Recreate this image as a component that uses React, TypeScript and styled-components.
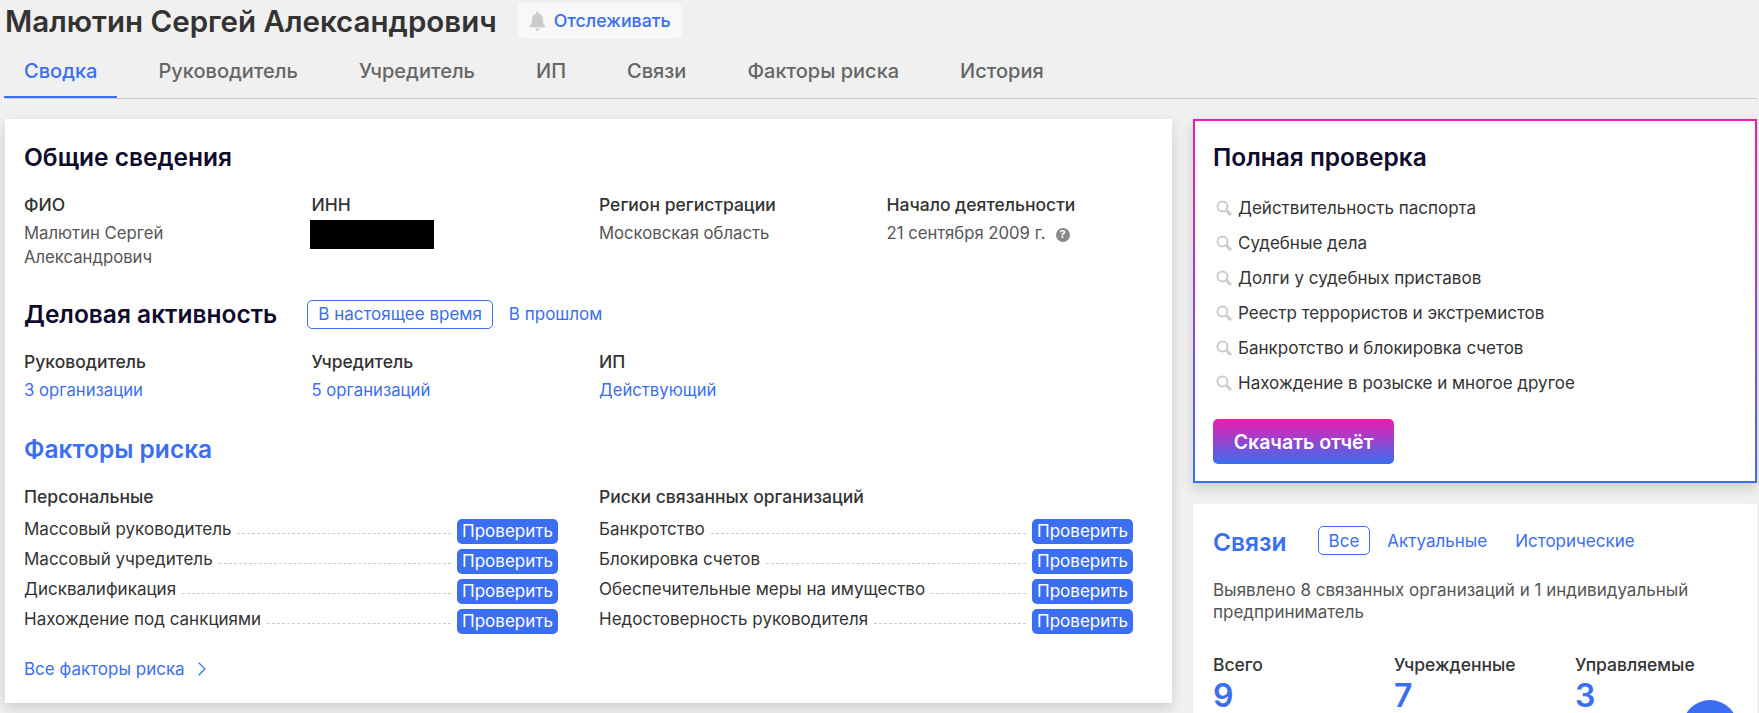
import React from "react";
import styled, { createGlobalStyle } from "styled-components";
import { ChevronRight } from "lucide-react";

const GlobalStyle = createGlobalStyle`
	html, body {
		margin: 0;
		height: 100%;
		overflow: hidden;
		background: #f0f0f0;
		font-family: Inter, Roboto, sans-serif;
		font-size: 17px;
		color: #333;
	}
	* { box-sizing: border-box; }
`;

const blue = "#3b6ef0";
const navy = "#0e0b2d";

const Page = styled.div`
	width: 1759px;
	height: 713px;
	overflow: hidden;
	padding: 3px 2px 0 5px;
`;

const Header = styled.header`
	display: flex;
	align-items: center;
	gap: 21px;
	height: 35px;
`;

const Title = styled.h1`
	margin: 0;
	font-size: 29.5px;
	font-weight: 600;
	color: #333;
`;

const TrackButton = styled.button`
	display: flex;
	align-items: center;
	gap: 8px;
	width: 164px;
	height: 35px;
	padding: 0 11px;
	border: 0;
	border-radius: 5px;
	background: #f8f8f8;
	color: ${blue};
	font: 500 17.8px Inter, sans-serif;
	white-space: nowrap;
`;

const Tabs = styled.nav`
	display: flex;
	gap: 21px;
	height: 61px;
	border-bottom: 1px solid #ccc;
`;

const Tab = styled.a<{ $active?: boolean }>`
	display: flex;
	align-items: center;
	height: 60px;
	padding: 8px 20px 0;
	font-size: 20px;
	font-weight: 500;
	color: ${({ $active }) => ($active ? blue : "#666")};
	border-bottom: 2px solid ${({ $active }) => ($active ? blue : "transparent")};

	&:first-child {
		margin-left: -1px;
	}
`;

const Columns = styled.div`
	display: flex;
	gap: 21px;
	margin-top: 20px;
`;

const MainCard = styled.section`
	width: 1167px;
	height: 584px;
	flex: none;
	padding: 20px 40px 0 19px;
	background: #fff;
	box-shadow: 0 5px 12px rgba(0, 0, 0, 0.15);
`;

const Side = styled.aside`
	display: flex;
	flex-direction: column;
	gap: 21px;
	width: 564px;
`;

const Heading = styled.h2<{ $blue?: boolean }>`
	margin: 0;
	font-size: 24.5px;
	line-height: 36px;
	font-weight: 600;
	color: ${({ $blue }) => ($blue ? blue : navy)};
`;

const InfoGrid = styled.div<{ $top: number }>`
	display: grid;
	grid-template-columns: repeat(4, 287.5px);
	margin-top: ${({ $top }) => $top}px;
`;

const Label = styled.div`
	font-size: 17.5px;
	font-weight: 500;
	line-height: 24px;
	color: #333;
`;

const Value = styled.div`
	margin-top: 4px;
	font-size: 16.7px;
	line-height: 24px;
	color: #555;
	width: 250px;
`;

const LinkValue = styled(Value)`
	color: ${blue};
`;

const Redacted = styled.div`
	width: 124px;
	height: 29px;
	margin: 3px 0 0 -2px;
	background: #000;
`;

const HelpDot = styled.span`
	display: inline-flex;
	align-items: center;
	justify-content: center;
	width: 14px;
	height: 14px;
	margin-left: 10px;
	border-radius: 50%;
	background: #888;
	color: #fff;
	font-size: 11px;
	font-weight: 700;
	line-height: 1;
	vertical-align: 1px;
`;

const HeadingRow = styled.div<{ $top: number; $gap: number }>`
	display: flex;
	align-items: center;
	margin-top: ${({ $top }) => $top}px;
	gap: ${({ $gap }) => $gap}px;
`;

const Filter = styled.a<{ $active?: boolean }>`
	display: flex;
	align-items: center;
	height: 29px;
	padding: 0 10px;
	border: 1px solid ${({ $active }) => ($active ? blue : "transparent")};
	border-radius: 5px;
	color: ${blue};
`;

const RiskGrid = styled.div`
	display: grid;
	grid-template-columns: 534px 534px;
	column-gap: 41px;
	margin-top: 18px;
`;

const RiskColumn = styled.div`
	display: flex;
	flex-direction: column;
`;

const RiskTitle = styled(Label)`
	margin-bottom: 7px;
`;

const RiskRow = styled.div`
	display: flex;
	align-items: center;
	height: 30px;
`;

const RiskName = styled.span`
	position: relative;
	top: -2px;
	line-height: 24px;
	color: #333;
	white-space: nowrap;
`;

const Dots = styled.span`
	flex: 1;
	margin: 5px 6px 0;
	border-bottom: 1px dashed #ccc;
`;

const CheckButton = styled.button`
	width: 101px;
	height: 25px;
	padding: 0;
	border: 0;
	border-radius: 5px;
	background: ${blue};
	color: #fff;
	font: 400 17px/25px Inter, sans-serif;
`;

const AllLink = styled.a`
	display: flex;
	align-items: center;
	gap: 5px;
	margin-top: 21px;
	line-height: 24px;
	color: ${blue};
`;

const PromoCard = styled.section`
	height: 364px;
	padding: 18px 18px 0;
	border: 2px solid transparent;
	background:
		linear-gradient(#fff, #fff) padding-box,
		linear-gradient(180deg, #ee1bae, ${blue}) border-box;
	box-shadow: 0 5px 12px rgba(0, 0, 0, 0.15);
`;

const CheckList = styled.ul`
	display: flex;
	flex-direction: column;
	gap: 11px;
	margin: 21px 0 0;
	padding: 0;
	list-style: none;
`;

const CheckItem = styled.li`
	display: flex;
	align-items: center;
	gap: 6px;
	height: 24px;
	color: #333;
`;

const SearchIcon = styled.svg`
	width: 16px;
	height: 16px;
	flex: none;
	margin-left: 3px;
`;

const DownloadButton = styled.button`
	width: 181px;
	height: 45px;
	margin-top: 24px;
	border: 0;
	border-radius: 5px;
	background: linear-gradient(180deg, #ee1bae, ${blue});
	color: #fff;
	font: 600 19.5px Inter, sans-serif;
`;

const LinksCard = styled.section`
	height: 260px;
	padding: 20px 20px 0;
	background: #fff;
`;

const FilterRow = styled.div<{ $gap: number; $raise?: number }>`
	display: flex;
	align-items: center;
	gap: ${({ $gap }) => $gap}px;
	margin-bottom: ${({ $raise }) => $raise ?? 0}px;
`;

const LinksText = styled.p`
	margin: 19px 0 0;
	line-height: 22px;
	color: #555;
`;

const Stats = styled.div`
	display: grid;
	grid-template-columns: repeat(3, 181px);
	margin-top: 30px;
`;

const StatNumber = styled.div`
	font-size: 32px;
	line-height: 38px;
	font-weight: 600;
	color: ${blue};
`;

const Fab = styled.div`
	position: fixed;
	left: 1682px;
	top: 700px;
	width: 56px;
	height: 56px;
	border-radius: 50%;
	background: ${blue};
`;

const tabs = ["Сводка", "Руководитель", "Учредитель", "ИП", "Связи", "Факторы риска", "История"];
const personal = ["Массовый руководитель", "Массовый учредитель", "Дисквалификация", "Нахождение под санкциями"];
const related = ["Банкротство", "Блокировка счетов", "Обеспечительные меры на имущество", "Недостоверность руководителя"];
const checks = [
	"Действительность паспорта",
	"Судебные дела",
	"Долги у судебных приставов",
	"Реестр террористов и экстремистов",
	"Банкротство и блокировка счетов",
	"Нахождение в розыске и многое другое",
];

const Risks: React.FC<{ title: string; items: string[] }> = ({ title, items }) => (
	<RiskColumn>
		<RiskTitle>{title}</RiskTitle>
		{items.map((item) => (
			<RiskRow key={item}>
				<RiskName>{item}</RiskName>
				<Dots />
				<CheckButton>Проверить</CheckButton>
			</RiskRow>
		))}
	</RiskColumn>
);

const App: React.FC = () => {
	return (
		<Page>
			<GlobalStyle />
			<Header>
				<Title>Малютин Сергей Александрович</Title>
				<TrackButton>
					<svg width="18" height="20" viewBox="0 0 18 20" fill="#ccc">
						<path d="M9 0a1.5 1.5 0 0 1 1.5 1.5v.7C13.4 2.9 15 5.4 15 8.4v4.1l2.4 3.1c.3.4 0 1-.5 1H1.1c-.5 0-.8-.6-.5-1L3 12.5V8.4c0-3 1.6-5.5 4.500-6.200v-.7A1.500 1.500 0 0 1 9 0z" />
						<path d="M6.800 18h4.400a2.200 2 0 0 1-4.400 0z" />
					</svg>
					Отслеживать
				</TrackButton>
			</Header>
			<Tabs>
				{tabs.map((tab, i) => (
					<Tab key={tab} $active={i === 0}>{tab}</Tab>
				))}
			</Tabs>
			<Columns>
				<MainCard>
					<Heading>Общие сведения</Heading>
					<InfoGrid $top={18}>
						<div>
							<Label>ФИО</Label>
							<Value>Малютин Сергей Александрович</Value>
						</div>
						<div>
							<Label>ИНН</Label>
							<Redacted />
						</div>
						<div>
							<Label>Регион регистрации</Label>
							<Value>Московская область</Value>
						</div>
						<div>
							<Label>Начало деятельности</Label>
							<Value>
								21 сентября 2009 г.
								<HelpDot>?</HelpDot>
							</Value>
						</div>
					</InfoGrid>
					<HeadingRow $top={27} $gap={30}>
						<Heading>Деловая активность</Heading>
						<FilterRow $gap={5}>
							<Filter $active>В настоящее время</Filter>
							<Filter>В прошлом</Filter>
						</FilterRow>
					</HeadingRow>
					<InfoGrid $top={18}>
						<div>
							<Label>Руководитель</Label>
							<LinkValue>3 организации</LinkValue>
						</div>
						<div>
							<Label>Учредитель</Label>
							<LinkValue>5 организаций</LinkValue>
						</div>
						<div>
							<Label>ИП</Label>
							<LinkValue>Действующий</LinkValue>
						</div>
					</InfoGrid>
					<HeadingRow $top={29} $gap={0}>
						<Heading $blue>Факторы риска</Heading>
					</HeadingRow>
					<RiskGrid>
						<Risks title="Персональные" items={personal} />
						<Risks title="Риски связанных организаций" items={related} />
					</RiskGrid>
					<AllLink>
						Все факторы риска
						<ChevronRight size={24} strokeWidth={1.2} />
					</AllLink>
				</MainCard>
				<Side>
					<PromoCard>
						<Heading>Полная проверка</Heading>
						<CheckList>
							{checks.map((check) => (
								<CheckItem key={check}>
									<SearchIcon viewBox="0 0 16 16" fill="none" stroke="#ccc">
										<circle cx="6.500" cy="6.500" r="5" strokeWidth="2" />
										<path d="M10.500 10.500L15 15" strokeWidth="3" />
									</SearchIcon>
									{check}
								</CheckItem>
							))}
						</CheckList>
						<DownloadButton>Скачать отчёт</DownloadButton>
					</PromoCard>
					<LinksCard>
						<HeadingRow $top={0} $gap={31}>
							<Heading $blue>Связи</Heading>
							<FilterRow $gap={6} $raise={3}>
								<Filter $active>Все</Filter>
								<Filter>Актуальные</Filter>
								<Filter>Исторические</Filter>
							</FilterRow>
						</HeadingRow>
						<LinksText>Выявлено 8 связанных организаций и 1 индивидуальный предприниматель</LinksText>
						<Stats>
							<div>
								<Label>Всего</Label>
								<StatNumber>9</StatNumber>
							</div>
							<div>
								<Label>Учрежденные</Label>
								<StatNumber>7</StatNumber>
							</div>
							<div>
								<Label>Управляемые</Label>
								<StatNumber>3</StatNumber>
							</div>
						</Stats>
					</LinksCard>
				</Side>
			</Columns>
			<Fab />
		</Page>
	);
};

export default App;
